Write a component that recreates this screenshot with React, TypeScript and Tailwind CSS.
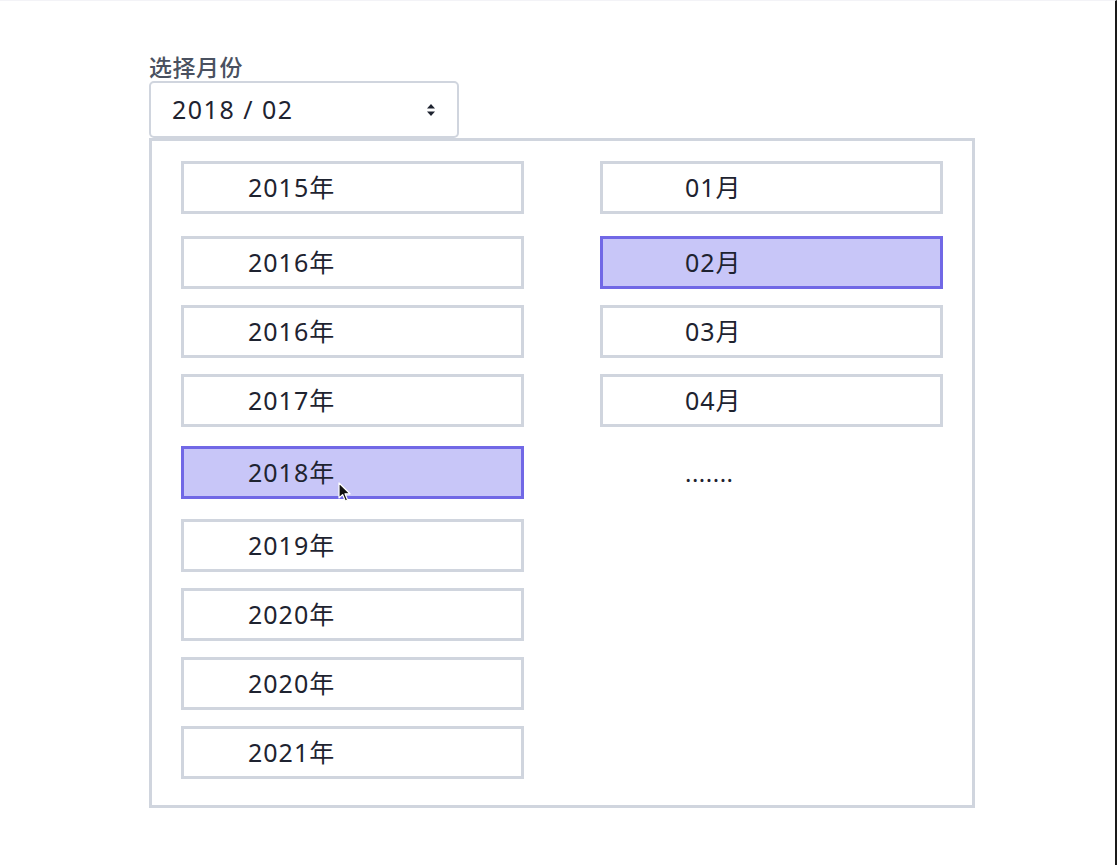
import { useState } from 'react';

const YEARS = ['2015年', '2016年', '2016年', '2017年', '2018年', '2019年', '2020年', '2020年', '2021年'];
const MONTHS = ['01月', '02月', '03月', '04月'];

// spacing between rows is uneven in the mock, keep it as drawn
const ROW_GAPS = ['mt-0', 'mt-[22px]', 'mt-4', 'mt-4', 'mt-[19px]', 'mt-5', 'mt-4', 'mt-4', 'mt-4'];

const FONT = { fontFamily: '"Noto Sans", "Noto Sans CJK SC", sans-serif' };

function Option({
  label,
  active,
  indent,
  gap,
  onClick,
  children,
}: {
  label: string;
  active: boolean;
  indent: string;
  gap: string;
  onClick: () => void;
  children?: React.ReactNode;
}) {
  return (
    <button
      onClick={onClick}
      className={`relative flex h-[53px] w-full items-center border-[3px] text-left text-[25px] tracking-[1px] text-[#1e2330] ${indent} ${gap} ${
        active ? 'border-[#7168e6] bg-[#c8c6f8]' : 'border-[#d0d5de] bg-white'
      }`}
    >
      {label}
      {children}
    </button>
  );
}

function SortIcon() {
  return (
    <svg width="10" height="14" viewBox="0 0 10 14" className="text-[#1e2330]">
      <path d="M5 1 L9 5.5 H1 Z" fill="currentColor" />
      <path d="M5 13 L9 8.5 H1 Z" fill="currentColor" />
    </svg>
  );
}

function Cursor() {
  return (
    <svg
      width="14"
      height="21"
      viewBox="0 0 14 21"
      className="pointer-events-none absolute left-[154px] top-[33px]"
    >
      <path
        d="M1 1 L1 16 L4.6 12.6 L7.3 19 L9.6 18 L7 11.8 L12 11.8 Z"
        fill="#111"
        stroke="#fff"
        strokeWidth="1.2"
        strokeLinejoin="round"
      />
    </svg>
  );
}

export default function App() {
  const [year, setYear] = useState(4);
  const [month, setMonth] = useState(1);

  return (
    <div
      className="min-h-screen w-full border-t border-t-[#f3f3f7] border-r-2 border-r-[#1a1a1a] bg-white"
      style={FONT}
    >
      <div className="pl-[149px] pt-[53px]">
        <div className="h-[26px] text-[23px] leading-[26px] font-medium tracking-[0.5px] text-[#4a5160]">选择月份</div>

        <div className="mt-[1px] flex h-[57px] w-[310px] items-center justify-between rounded-[5px] border-2 border-[#d0d5de] pl-[21px] pr-[21px]">
          <span className="text-[25px] tracking-[1.5px] text-[#1e2330]">
            2018 / 02
          </span>
          <SortIcon />
        </div>

        <div className="h-[670px] w-[826px] border-[3px] border-[#d0d5de] px-[29px] pt-[20px]">
          <div className="grid grid-cols-[343px_343px] gap-x-[76px]">
            <div className="flex flex-col">
              {YEARS.map((y, i) => (
                <Option
                  key={i}
                  label={y}
                  active={year === i}
                  indent="pl-[64px]"
                  gap={ROW_GAPS[i]}
                  onClick={() => setYear(i)}
                >
                  {i === 4 && <Cursor />}
                </Option>
              ))}
            </div>
            <div className="flex flex-col">
              {MONTHS.map((m, i) => (
                <Option
                  key={m}
                  label={m}
                  active={month === i}
                  indent="pl-[82px]"
                  gap={ROW_GAPS[i]}
                  onClick={() => setMonth(i)}
                />
              ))}
              <div className="mt-[19px] flex h-[53px] items-center pl-[85px] text-[24px] tracking-[0.5px] text-[#1e2330]">
                .......
              </div>
            </div>
          </div>
        </div>
      </div>
    </div>
  );
}
